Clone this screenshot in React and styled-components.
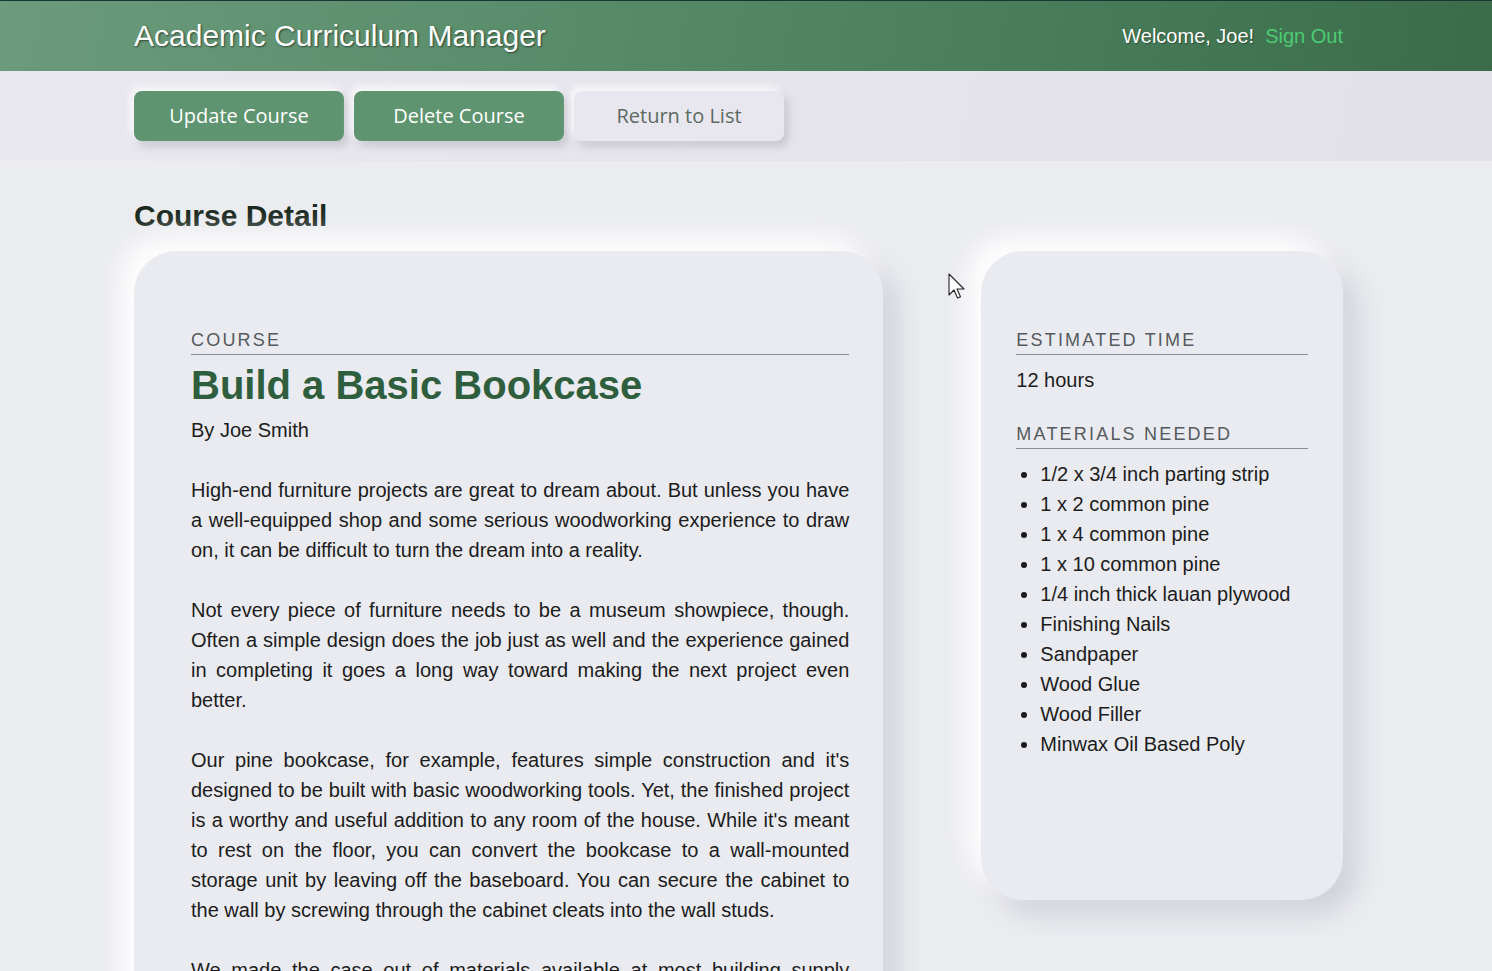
import React from "react";
import styled, { createGlobalStyle } from "styled-components";

const GlobalStyle = createGlobalStyle`
  html, body {
    margin: 0;
    padding: 0;
    overflow: hidden;
    background: #ebecf0;
    font-family: "Liberation Sans", Arial, sans-serif;
  }
`;

const Page = styled.div`
  min-height: 100vh;
  background: #ebecf0;
  position: relative;
`;

const Header = styled.header`
  height: 70px;
  border-top: 1px solid #17363a;
  background: linear-gradient(100deg, #6b9b7b 0%, #558966 45%, #3a6c4a 100%);
`;

const Inner = styled.div`
  box-sizing: border-box;
  width: 100%;
  padding: 0 149px 0 134px;
  height: 100%;
  display: flex;
  align-items: center;
  justify-content: ${(p) => p.$justify || "flex-start"};
  gap: ${(p) => p.$gap || "0"};
`;

const Brand = styled.h1`
  margin: 0;
  font-size: 30px;
  font-weight: 400;
  color: #fff;
  text-shadow: 1px 1px 2px rgba(0, 0, 0, 0.55);
  padding-bottom: 1px;
`;

const UserBox = styled.div`
  display: flex;
  align-items: center;
  gap: 11px;
  font-size: 20px;
  color: #fff;
  text-shadow: 1px 1px 1px rgba(0, 0, 0, 0.35);
`;

const SignOut = styled.a`
  color: #4ccb73;
  text-decoration: none;
  text-shadow: none;
`;

const ActionBar = styled.div`
  height: 90px;
  background: linear-gradient(100deg, #e9e7ef 0%, #e3e1e8 100%);
`;

const Button = styled.button`
  width: 210px;
  height: 50px;
  padding: 0 0 2px;
  border: none;
  border-radius: 8px;
  font-family: "Open Sans", sans-serif;
  font-size: 20px;
  cursor: pointer;
  background: ${(p) => (p.$primary ? "#5e9470" : "#e8e6ee")};
  color: ${(p) => (p.$primary ? "#fff" : "#5b6b62")};
  box-shadow: -4px -4px 8px rgba(255, 255, 255, 0.8),
    4px 5px 8px rgba(120, 125, 140, 0.3);
`;

const Main = styled.main`
  box-sizing: border-box;
  padding: 38px 149px 0 134px;
`;

const PageTitle = styled.h2`
  margin: 0 0 18px;
  font-size: 30px;
  font-weight: 700;
  color: #1b2a20;
  line-height: 34px;
`;

const Columns = styled.div`
  display: flex;
  align-items: flex-start;
  gap: 98px;
`;

const Card = styled.section`
  box-sizing: border-box;
  width: ${(p) => p.$width};
  background: #eaebf0;
  border-radius: 42px;
  padding: ${(p) => p.$pad};
  box-shadow: -14px -14px 26px rgba(255, 255, 255, 0.95),
    14px 14px 26px rgba(165, 170, 185, 0.4);
`;

const Label = styled.div`
  font-size: 18px;
  letter-spacing: 2.2px;
  color: #555a5e;
  line-height: 22px;
  padding-bottom: 3px;
  border-bottom: 1px solid #8a8d90;
  margin-top: ${(p) => p.$top || "0"};
`;

const CourseTitle = styled.h3`
  margin: 5px 0 0;
  font-size: 40px;
  font-weight: 700;
  color: #2e5e3d;
  line-height: 50px;
`;

const Author = styled.p`
  margin: 5px 0 30px;
  font-size: 20px;
  line-height: 30px;
  color: #1c1c1c;
`;

const Para = styled.p`
  margin: 0 0 30px;
  font-size: 20px;
  line-height: 30px;
  color: #1c1c1c;
  text-align: justify;
`;

const Value = styled.p`
  margin: 10px 0 0;
  font-size: 20px;
  line-height: 30px;
  color: #1c1c1c;
`;

const Materials = styled.ul`
  margin: 10px 0 0;
  padding-left: 24px;
  font-size: 20px;
  line-height: 30px;
  color: #1c1c1c;
`;

const Cursor = styled.svg`
  position: absolute;
  left: 948px;
  top: 273px;
`;

const materials = [
  "1/2 x 3/4 inch parting strip",
  "1 x 2 common pine",
  "1 x 4 common pine",
  "1 x 10 common pine",
  "1/4 inch thick lauan plywood",
  "Finishing Nails",
  "Sandpaper",
  "Wood Glue",
  "Wood Filler",
  "Minwax Oil Based Poly",
];

export default function App() {
  return (
    <Page>
      <GlobalStyle />
      <Header>
        <Inner $justify="space-between">
          <Brand>Academic Curriculum Manager</Brand>
          <UserBox>
            <span>Welcome, Joe!</span>
            <SignOut href="#">Sign Out</SignOut>
          </UserBox>
        </Inner>
      </Header>
      <ActionBar>
        <Inner $gap="10px">
          <Button $primary>Update Course</Button>
          <Button $primary>Delete Course</Button>
          <Button>Return to List</Button>
        </Inner>
      </ActionBar>
      <Main>
        <PageTitle>Course Detail</PageTitle>
        <Columns>
          <Card $width="750px" $pad="78px 34px 40px 57px">
            <Label>COURSE</Label>
            <CourseTitle>Build a Basic Bookcase</CourseTitle>
            <Author>By Joe Smith</Author>
            <Para>
              High-end furniture projects are great to dream about. But unless
              you have a well-equipped shop and some serious woodworking
              experience to draw on, it can be difficult to turn the dream into
              a reality.
            </Para>
            <Para>
              Not every piece of furniture needs to be a museum showpiece,
              though. Often a simple design does the job just as well and the
              experience gained in completing it goes a long way toward making
              the next project even better.
            </Para>
            <Para>
              Our pine bookcase, for example, features simple construction and
              it's designed to be built with basic woodworking tools. Yet, the
              finished project is a worthy and useful addition to any room of
              the house. While it's meant to rest on the floor, you can convert
              the bookcase to a wall-mounted storage unit by leaving off the
              baseboard. You can secure the cabinet to the wall by screwing
              through the cabinet cleats into the wall studs.
            </Para>
            <Para>
              We made the case out of materials available at most building
              supply stores and home centers, and then finished it with an
              easy-to-apply wipe-on polyurethane.
            </Para>
          </Card>
          <Card $width="362px" $pad="78px 35px 141px 35px">
            <Label>ESTIMATED TIME</Label>
            <Value>12 hours</Value>
            <Label $top="28px">MATERIALS NEEDED</Label>
            <Materials>
              {materials.map((m) => (
                <li key={m}>{m}</li>
              ))}
            </Materials>
          </Card>
        </Columns>
      </Main>
      <Cursor width="20" height="28" viewBox="0 0 20 28">
        <path
          d="M1 1 L1 22 L6 17 L9.5 25 L12.5 23.7 L9 16 L16 16 Z"
          fill="#fff"
          stroke="#222"
          strokeWidth="1.1"
          strokeLinejoin="round"
        />
      </Cursor>
    </Page>
  );
}
